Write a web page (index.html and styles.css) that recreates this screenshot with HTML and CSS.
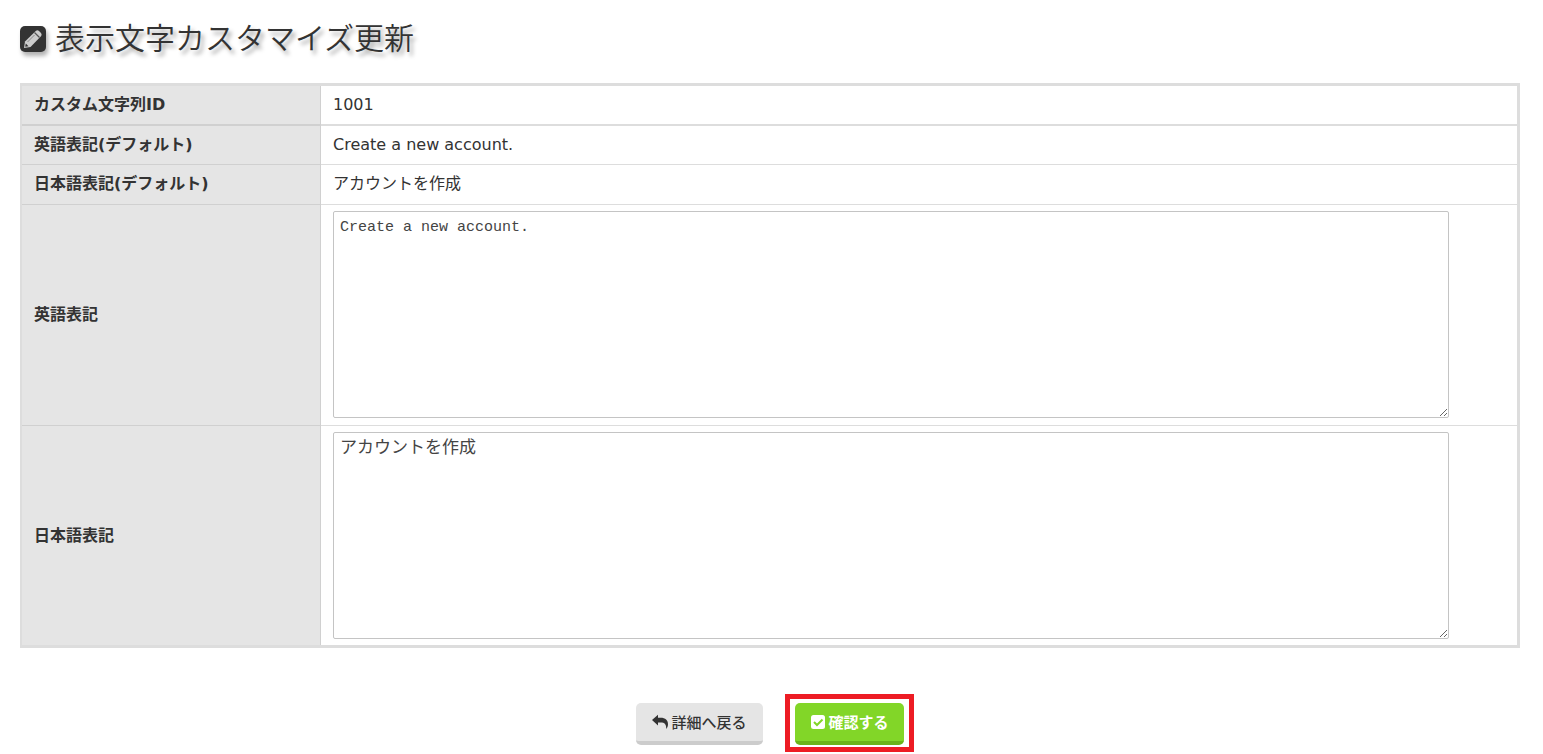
FILE: index.html
```html
<!DOCTYPE html>
<html lang="ja">
<head>
<meta charset="UTF-8">
<meta name="viewport" content="width=device-width, initial-scale=1.0">
<title>表示文字カスタマイズ更新</title>
<link rel="stylesheet" href="styles.css">
</head>
<body>
    <main class="container">
        <h1 class="page-title">
            <svg class="title-icon" viewBox="0 0 26 26" aria-hidden="true">
                <rect width="26" height="26" rx="5" fill="#333"/>
                <path d="M4 22L5 15.500L16 4.800Q17.500 3.800 19 5L21 7Q22.200 8.500 21.200 10L10.500 21Z" fill="#ccc"/>
                <path d="M14.500 6.500L19.500 11.500" fill="none" stroke="#555" stroke-width="1.200"/>
                <path d="M7.500 16L14.500 9" fill="none" stroke="#888" stroke-width="1"/>
                <path d="M5.800 17.500L8.500 20.200L5.200 20.800Z" fill="#333"/>
            </svg>
            <span>表示文字カスタマイズ更新</span>
        </h1>

        <form id="customForm">
            <table class="form-table">
                <tbody>
                    <tr class="id-row">
                        <th scope="row">カスタム文字列ID</th>
                        <td>1001</td>
                    </tr>
                    <tr>
                        <th scope="row">英語表記(デフォルト)</th>
                        <td>Create a new account.</td>
                    </tr>
                    <tr>
                        <th scope="row">日本語表記(デフォルト)</th>
                        <td>アカウントを作成</td>
                    </tr>
                    <tr>
                        <th scope="row"><label for="textEn">英語表記</label></th>
                        <td><textarea id="textEn" name="textEn" class="text-en" spellcheck="false">Create a new account.</textarea></td>
                    </tr>
                    <tr>
                        <th scope="row"><label for="textJa">日本語表記</label></th>
                        <td><textarea id="textJa" name="textJa" class="text-ja" spellcheck="false">アカウントを作成</textarea></td>
                    </tr>
                </tbody>
            </table>

            <div class="buttons">
                <button type="button" class="btn btn-back">
                    <svg class="btn-icon" viewBox="0 0 16 16" aria-hidden="true">
                        <path d="M0 6L6 .8V3.800H8.500C13.500 3.800 16 6.300 16 10.200C16 12.200 15.200 13.800 14.200 15C14.400 10.500 12.800 8.600 8.500 8.600H6V11.500Z" fill="#333"/>
                    </svg>
                    <span>詳細へ戻る</span>
                </button>
                <button type="submit" class="btn btn-confirm">
                    <svg class="btn-icon" viewBox="0 0 16 16" aria-hidden="true">
                        <rect x="1" y="1" width="14" height="14" rx="2.500" fill="#fff"/>
                        <path d="M4 8l3 3 5.500-5.500" fill="none" stroke="#82d628" stroke-width="2"/>
                    </svg>
                    <span>確認する</span>
                </button>
            </div>
        </form>
    </main>
</body>
</html>
```
FILE: styles.css
```css
* {
    box-sizing: border-box;
}

body {
    margin: 0;
    font-family: "DejaVu Sans", "Noto Sans CJK JP", sans-serif;
    font-size: 16px;
    line-height: 24px;
    color: #333;
    background-color: #fff;
}

.container {
    padding: 19px 23px 0 20px;
}

.page-title {
    display: flex;
    align-items: center;
    gap: 9px;
    margin: 0 0 24px;
    font-size: 30px;
    font-weight: 350;
    line-height: 40px;
    text-shadow: 3px 4px 4px rgba(0, 0, 0, 0.35);
}

.title-icon {
    width: 26px;
    height: 26px;
    filter: drop-shadow(2px 4px 2px rgba(0, 0, 0, 0.3));
}

.form-table {
    width: 100%;
    border: 3px solid #ddd;
    border-left-width: 2px;
    border-collapse: separate;
    border-spacing: 0;
}

.form-table th,
.form-table td {
    padding: 7px 9px 8px 12px;
    border-bottom: 1px solid #ddd;
    text-align: left;
}

.form-table th {
    width: 299px;
    border-right: 1px solid #d0d0d0;
    border-bottom-color: #d0d0d0;
    background-color: #e5e5e5;
    font-weight: bold;
}

.form-table .id-row th,
.form-table .id-row td {
    padding-bottom: 7px;
    border-bottom-width: 2px;
}

.form-table .id-row + tr th,
.form-table .id-row + tr td {
    padding-bottom: 7px;
}

.form-table td:has(textarea) {
    padding-top: 6px;
    padding-bottom: 7px;
}

.form-table tr:last-child th,
.form-table tr:last-child td {
    padding-bottom: 6px;
    border-bottom: none;
}

textarea {
    display: block;
    width: 95%;
    height: 207px;
    padding: 4px 6px;
    border: 1px solid #c4c4c4;
    border-radius: 2px;
    background-color: #fff;
    color: #444;
    font-family: "Liberation Mono", "Noto Sans CJK JP", monospace;
    line-height: 24px;
    resize: both;
}

.text-en {
    font-size: 15px;
}

.text-ja {
    font-size: 17px;
}

.buttons {
    display: flex;
    justify-content: center;
    gap: 32px;
    padding: 55px 0 8px;
}

.btn {
    display: flex;
    align-items: center;
    gap: 3px;
    height: 42px;
    padding: 0 16px;
    border: none;
    border-bottom: 4px solid #ccc;
    border-radius: 5px;
    font-family: "Noto Sans CJK JP", sans-serif;
    font-size: 15px;
    font-weight: bold;
    line-height: 24px;
    cursor: pointer;
}

.btn-icon {
    width: 16px;
    height: 16px;
}

.btn-back {
    background-color: #e5e5e5;
    color: #333;
    font-weight: 500;
}

.btn-confirm {
    position: relative;
    padding: 0 15px;
    border-bottom-color: #6ab31a;
    background-color: #82d628;
    color: #fff;
}

/* red frame round the confirm button */
.btn-confirm::after {
    content: "";
    position: absolute;
    inset: -9px -10px -11px;
    border: 5px solid #ed1c24;
    pointer-events: none;
}
```
